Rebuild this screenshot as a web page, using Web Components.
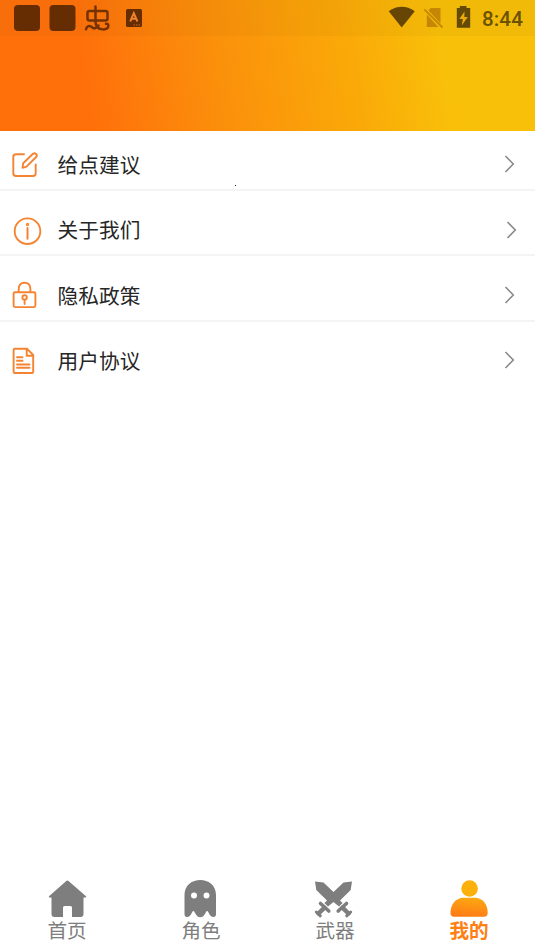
<!DOCTYPE html>
<html lang="zh-CN">
<head>
<meta charset="utf-8">
<title>我的</title>
<style>
html,body{margin:0;height:100%;background:#fff}
body{font-family:"Noto Sans CJK SC",sans-serif;overflow:hidden}
</style>
</head>
<body>
<profile-page></profile-page>
<script>
const define = (name, html) => {
  const t = document.createElement('template');
  t.innerHTML = html;
  customElements.define(name, class extends HTMLElement {
    constructor() {
      super();
      this.attachShadow({mode: 'open'}).append(t.content.cloneNode(true));
    }
  });
};

define('status-bar', `
<style>
:host{display:flex;justify-content:space-between;height:36px;background:rgba(90,60,0,.045)}
svg{display:block}
.right{display:flex}
.time{width:53px;padding-top:1px;box-sizing:border-box;font:500 20.5px/36px Roboto,sans-serif;color:#6b5104;letter-spacing:.15px}
</style>
<svg width="150" height="36" viewBox="0 0 150 36">
  <g fill="#662d03"><rect x="14" y="5" width="26" height="26" rx="4"/><rect x="49.500" y="5" width="26" height="26" rx="4"/><rect x="126" y="9" width="16" height="18" rx="1.500"/></g>
  <g fill="none" stroke="#743204" stroke-width="2.500" stroke-linecap="round" stroke-linejoin="round">
    <rect x="87.500" y="11" width="20" height="9.500" rx="2"/>
    <path d="M95.500 6.500V21Q95.500 25.500 97.500 27.500C99.500 29.500 106 30.500 108 27.500Q109.300 23.500 106 23.800M86 29.300C87 25.300 90 25.500 92 27.300S96 28.500 98.500 25.500"/>
  </g>
  <path d="M130.200 21.500L133.800 13.200L137.400 21.500M131.500 18.700H136.100" fill="none" stroke="#ef842f" stroke-width="1.900"/>
  <path d="M133.500 25H140" stroke="#c96b20" stroke-width="1.200" stroke-dasharray="1.500 1"/>
</svg>
<div class="right">
<svg width="97" height="36" viewBox="385 0 97 36">
  <path d="M388.700 11.200Q401.700 2.500 414.800 11.200L401.700 27.500Z" fill="#674504"/>
  <path d="M430.500 8H440.500V23.500L428.500 10.500ZM426.800 14.500L438.300 27H426.800Z" fill="#c58606"/>
  <path d="M424.300 9.300L442.500 27.500" stroke="#c58606" stroke-width="1.800"/>
  <path d="M459.800 6H466.500V8H470.200V27.800H456.800V8H459.800Z" fill="#644a04"/>
  <path d="M464.500 11.500L459.300 19H462.800L461.800 25.500L467.800 17H464.300Z" fill="#e8ac08"/>
</svg>
<div class="time">8:44</div></div>`);

define('page-header', `
<style>
:host{display:block;height:131px;background:linear-gradient(81deg,#ff700b 17%,#fb900b 41%,#faa908 65%,#f9c009 82%)}
</style><slot></slot>`);

define('menu-row', `
<style>
:host{display:flex;align-items:center;height:65.400px;box-sizing:border-box;border-bottom:2px solid #f4f4f5;padding-top:14px}
:host([first]){height:60px;padding-top:8.600px}
:host([last]){border-color:transparent}
.icon{width:58px;height:36px;flex:none}
.label{flex:1;font-size:20.700px;line-height:30px;color:#262626;padding-bottom:1px;margin-left:-.4px}
svg{display:block;margin-right:17px}
:host([shift]) svg{margin-right:15.500px}
</style>
<div class="icon"><slot name="icon"></slot></div>
<div class="label"><slot></slot></div>
<svg width="14" height="20" viewBox="0 0 14 20" fill="none" stroke="#8a8a8a" stroke-width="1.600"><path d="M1.500 2L9.300 10L1.500 18"/></svg>`);

define('line-icon', `
<style>:host{display:block;height:36px}</style><slot></slot>`);
const lineIcons = {
  edit: '<path d="M24 8.300H16Q13.300 8.300 13.300 11V27.300Q13.300 30 16 30H33Q35.700 30 35.700 27.300V18.500M22.500 21.800L23.200 17.200L33 7.800Q34.500 6.600 36 8Q37.600 9.500 36.200 11L26.500 20.700Z"/>',
  info: '<circle cx="27.500" cy="19.200" r="12.800"/><path d="M27.500 16V26.800" stroke-width="2"/><circle cx="27.500" cy="12.500" r=".7"/>',
  lock: '<rect x="13.600" y="15.300" width="21.800" height="14.800" rx="1.500"/><path d="M18.700 15V12.300Q18.700 5.700 24.600 5.700T30.400 12.300V15M24.600 22.700V27"/><circle cx="24.600" cy="20.400" r="2.200"/>',
  file: '<path d="M15 6.800H27.200L33.200 13V29.700Q33.200 31 32 31H15Q13.600 31 13.600 29.700V8.200Q13.600 6.800 15 6.800ZM26.700 7V13.800H33M17 15.200H22.500M17 18.700H22.500M17 22.500H29.500M17 25.700H29.500"/>'
};
const tabIcons = {
  home: '<path d="M49 18.300L66 3.200Q67.400 1.900 68.800 3.200L86 18.300Q86.800 19.500 85.300 19.500H83.500V36Q83.500 39 80.500 39H72V29.500Q72 28 70.500 28H64.500Q63 28 63 29.500V39H54.500Q51.500 39 51.500 36V19.500H49.700Q48.300 19.500 49 18.300Z"/>',
  ghost: '<path fill-rule="evenodd" d="M184.500 36V17C184.500 -3 216 -3 216 17V36Q216 39 213.500 39Q210.500 39 208.500 34.500Q206.800 31.500 205.500 35Q203.500 39.200 200.300 39.200T195 35Q193.700 31.500 192 34.500Q190 39 187 39Q184.500 39 184.500 36ZM191 17.400A3 3 0 1 0 197 17.400A3 3 0 1 0 191 17.400M203.500 17.400A3 3 0 1 0 209.500 17.400A3 3 0 1 0 203.500 17.400"/>',
  swords: '<path d="M315 3.500L323.500 4.500L333.500 14L343.500 4.500L352 3.500L350.700 12L340 22.500L342.600 25L339 28.500L333.500 24L328 28.500L324.400 25L327 22.500L316.300 12Z"/><g stroke="#7e7e7e" stroke-linecap="round" fill="none"><path stroke-width="3.600" d="M320.500 25.500L328.800 33M346.500 25.500L338.200 33"/><path stroke-width="4.500" d="M324.500 29.700L318.500 35.500M342.500 29.700L348.500 35.500"/><path stroke-width="3" d="M316.300 34L320.300 37.800M350.700 34L346.700 37.800"/></g>',
  user: '<defs><linearGradient id="g" x1="0.600" y1="0" x2="0.400" y2="1"><stop stop-color="#fda812"/><stop offset="1" stop-color="#fe7b16"/></linearGradient></defs><circle cx="469.600" cy="10.500" r="8.300" fill="#fdb00b"/><path d="M450.500 35C450.500 26 456 19.700 463.500 19.700H475C482.500 19.700 487.700 26 487.700 35Q487.700 38.700 484 38.700H454Q450.500 38.700 450.500 35Z" fill="url(#g)"/>'
};

define('tab-item', `
<style>
:host{display:flex;flex-direction:column;align-items:center;flex:1;color:#7e7e7e;font-size:19.600px}
:host([active]){color:#fe8012;font-weight:700}
.label{line-height:25px;margin-top:-2px}
</style><slot name="icon"></slot><div class="label"><slot></slot></div>`);

define('tab-bar', `
<style>:host{display:flex;height:74px;background:#fff}</style><slot></slot>`);

const row = (icon, label, attr = '') => `<menu-row ${attr}><line-icon slot="icon"><svg width="58" height="36" viewBox="0 0 58 36" fill="none" stroke="#f58432" stroke-width="1.900" stroke-linecap="round" stroke-linejoin="round">${lineIcons[icon]}</svg></line-icon>${label}</menu-row>`;
const tab = (icon, label, x, attr = '') => `<tab-item ${attr}><svg slot="icon" width="134" height="41" viewBox="${x} 0 134 41" fill="#7e7e7e">${tabIcons[icon]}</svg>${label}</tab-item>`;

define('profile-page', `
<style>
:host{display:flex;flex-direction:column;width:535px;height:952px;background:#fff}
main{flex:1;position:relative}
.speck{position:absolute;left:235px;top:54px;width:1px;height:1px;background:#222}
</style>
<page-header><status-bar></status-bar></page-header>
<main>
${row('edit', '给点建议', 'first')}
${row('info', '关于我们', 'shift')}
${row('lock', '隐私政策')}
${row('file', '用户协议', 'last')}
<span class="speck"></span>
</main>
<tab-bar>
${tab('home', '首页', 0)}
${tab('ghost', '角色', 134)}
${tab('swords', '武器', 268)}
${tab('user', '我的', 402, 'active')}
</tab-bar>`);
</script>
</body>
</html>
